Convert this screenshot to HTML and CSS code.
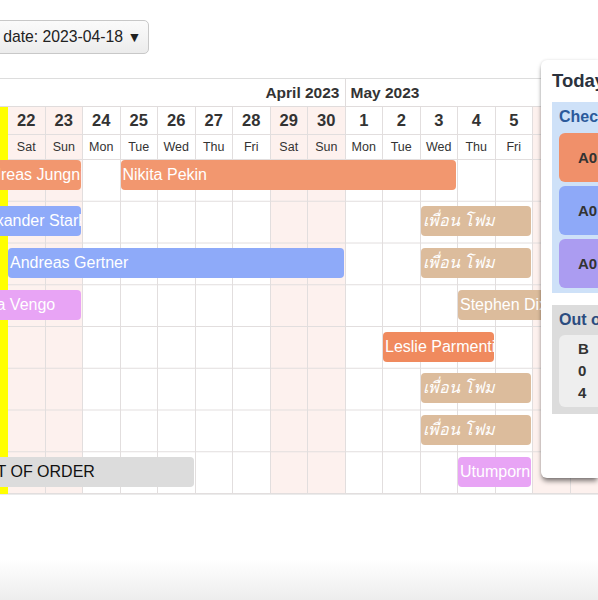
FILE: index.html
```html
<!DOCTYPE html>
<html lang="en">
<head>
<meta charset="utf-8">
<title>Booking calendar</title>
<link rel="stylesheet" href="styles.css">
</head>
<body>
<div class="toolbar">
  <button class="date-btn">Select date: 2023-04-18 <span class="caret">▼</span></button>
</div>

<div class="calendar">
  <div class="inner">
    <div class="months">
      <div class="month month-apr">April 2023</div>
      <div class="month month-may">May 2023</div>
    </div>
    <div class="stage">
      <div class="columns">
        <div class="day today"></div>
        <div class="day we"><div class="num">22</div><div class="name">Sat</div><div class="cells"></div></div>
        <div class="day we"><div class="num">23</div><div class="name">Sun</div><div class="cells"></div></div>
        <div class="day"><div class="num">24</div><div class="name">Mon</div><div class="cells"></div></div>
        <div class="day"><div class="num">25</div><div class="name">Tue</div><div class="cells"></div></div>
        <div class="day"><div class="num">26</div><div class="name">Wed</div><div class="cells"></div></div>
        <div class="day"><div class="num">27</div><div class="name">Thu</div><div class="cells"></div></div>
        <div class="day"><div class="num">28</div><div class="name">Fri</div><div class="cells"></div></div>
        <div class="day we"><div class="num">29</div><div class="name">Sat</div><div class="cells"></div></div>
        <div class="day we"><div class="num">30</div><div class="name">Sun</div><div class="cells"></div></div>
        <div class="day"><div class="num">1</div><div class="name">Mon</div><div class="cells"></div></div>
        <div class="day"><div class="num">2</div><div class="name">Tue</div><div class="cells"></div></div>
        <div class="day"><div class="num">3</div><div class="name">Wed</div><div class="cells"></div></div>
        <div class="day"><div class="num">4</div><div class="name">Thu</div><div class="cells"></div></div>
        <div class="day"><div class="num">5</div><div class="name">Fri</div><div class="cells"></div></div>
        <div class="day we"><div class="num">6</div><div class="name">Sat</div><div class="cells"></div></div>
        <div class="day we"><div class="num">7</div><div class="name">Sun</div><div class="cells"></div></div>
      </div>
      <div class="bars">
        <div class="bar first orange" style="grid-column: 1 / 4; grid-row: 2">Andreas Jungnickel</div>
        <div class="bar first orange" style="grid-column: 5 / 14; grid-row: 2">Nikita Pekin</div>

        <div class="bar blue" style="grid-column: 1 / 4; grid-row: 3">Alexander Stark</div>
        <div class="bar tan thai" style="grid-column: 13 / 16; grid-row: 3">เพื่อน โฟม</div>

        <div class="bar blue" style="grid-column: 2 / 11; grid-row: 4">Andreas Gertner</div>
        <div class="bar tan thai" style="grid-column: 13 / 16; grid-row: 4">เพื่อน โฟม</div>

        <div class="bar violet" style="grid-column: 1 / 4; grid-row: 5">Nina Vengo</div>
        <div class="bar tan" style="grid-column: 14 / 18; grid-row: 5">Stephen Dixon</div>

        <div class="bar coral" style="grid-column: 12 / 15; grid-row: 6">Leslie Parmentier</div>

        <div class="bar tan thai" style="grid-column: 13 / 16; grid-row: 7">เพื่อน โฟม</div>

        <div class="bar tan thai" style="grid-column: 13 / 16; grid-row: 8">เพื่อน โฟม</div>

        <div class="bar grey" style="grid-column: 1 / 7; grid-row: 9">OUT OF ORDER</div>
        <div class="bar violet" style="grid-column: 14 / 16; grid-row: 9">Utumporn</div>
      </div>
    </div>
  </div>
</div>

<div class="page-shade"></div>

<aside class="today-card">
  <h2 class="card-title">Today</h2>
  <section class="panel checkins">
    <h3 class="panel-title">Check-ins</h3>
    <div class="tile tile-orange">A0</div>
    <div class="tile tile-blue">A0</div>
    <div class="tile tile-purple">A0</div>
  </section>
  <section class="panel outoforder">
    <h3 class="panel-title dark">Out of order</h3>
    <div class="ooo-list">
      <div class="ooo-row">B</div>
      <div class="ooo-row">0</div>
      <div class="ooo-row">4</div>
    </div>
  </section>
</aside>
</body>
</html>
```

FILE: styles.css
```css
html, body {
  margin: 0;
  padding: 0;
}

body {
  width: 598px;
  height: 600px;
  overflow: hidden;
  position: relative;
  background: #ffffff;
  font-family: "Liberation Sans", Arial, "Noto Sans", "DejaVu Sans", sans-serif;
  color: #333333;
}

/* ---------- toolbar ---------- */
.toolbar {
  padding-top: 20px;
  height: 34px;
  white-space: nowrap;
}

.date-btn {
  margin-left: -54px;
  height: 34px;
  padding: 0 7px 0 8px;
  font-family: "Liberation Sans", Arial, "DejaVu Sans", sans-serif;
  font-size: 15.75px;
  color: #222222;
  background: linear-gradient(#fbfbfb, #ececec);
  border: 1px solid #c8c8c8;
  border-radius: 5px;
  box-sizing: border-box;
}

.caret {
  font-size: 14px;
}

/* ---------- calendar ---------- */
.calendar {
  margin-top: 24px;
  border-top: 1px solid #dddddd;
  border-bottom: 1px solid #ebebeb;
  overflow: hidden;
}

.inner {
  margin-left: -29.5px;
  width: 637.5px;
}

.months {
  display: flex;
  height: 28px;
  box-sizing: border-box;
  border-bottom: 1px solid #e0dcdc;
  font-weight: bold;
  font-size: 15.5px;
  line-height: 27px;
  color: #333333;
}

.month-apr {
  width: 375px;
  flex: none;
  box-sizing: border-box;
  text-align: right;
  padding-right: 5px;
  border-right: 1px solid #e0dcdc;
}

.month-may {
  padding-left: 5px;
}

.stage {
  display: grid;
}

.stage > .columns,
.stage > .bars {
  grid-area: 1 / 1;
}

.columns {
  display: flex;
}

.day {
  width: 37.5px;
  flex: none;
  box-sizing: border-box;
  border-right: 1px solid #e2dede;
}

.day.we {
  background: #fdf1ee;
}

.day.today {
  background: #ffff00;
  border-right: none;
  height: 387px;
}

.num {
  height: 28px;
  box-sizing: border-box;
  border-bottom: 1px solid #e2dede;
  font-weight: bold;
  font-size: 16.5px;
  line-height: 27px;
  text-align: center;
  color: #333333;
}

.name {
  height: 25px;
  box-sizing: border-box;
  border-bottom: 1px solid #e2dede;
  font-size: 12.5px;
  line-height: 24px;
  text-align: center;
  color: #333333;
}

.cells {
  height: 334px;
  background-image: linear-gradient(to top, #e2dede 1px, transparent 1px);
  background-size: 100% 41.75px;
}

/* ---------- bars ---------- */
.bars {
  display: grid;
  grid-template-columns: repeat(17, 37.5px);
  grid-template-rows: 53px repeat(8, 41.75px);
}

.bar {
  align-self: start;
  min-width: 0;
  margin: 4.5px 2px 0 0;
  height: 30px;
  padding: 0 2px;
  border-radius: 4px;
  font-size: 16px;
  line-height: 30px;
  color: #ffffff;
  white-space: nowrap;
  overflow: hidden;
}

.bar.first {
  margin-top: 0;
  height: 29.5px;
}

.bar.thai {
  font-style: italic;
}

.orange { background: #f2976f; }
.coral  { background: #f08a5e; }
.blue   { background: #8eaaf9; }
.violet { background: #e8a4f5; }
.tan    { background: #dcbc9c; }
.grey   { background: #dcdcdc; color: #111111; }

/* ---------- bottom shade ---------- */
.page-shade {
  margin-top: 64px;
  height: 41px;
  background: linear-gradient(#ffffff, #ededed);
}

/* ---------- today card (overlay) ---------- */
.today-card {
  position: absolute;
  left: 541px;
  top: 60px;
  width: 57px;
  height: 418px;
  box-sizing: border-box;
  padding: 10px 0 0 11px;
  background: #ffffff;
  border-radius: 6px 0 0 6px;
  box-shadow: 0 4px 5px -1px rgba(0, 0, 0, 0.5), 0 0 3px rgba(0, 0, 0, 0.12);
  white-space: nowrap;
  overflow: hidden;
}

.card-title {
  margin: 0;
  font-size: 18.5px;
  line-height: 22px;
  font-weight: bold;
  color: #2b323d;
}

.panel {
  padding: 5px 0 5px 7px;
}

.checkins {
  margin-top: 10px;
  background: #cee1f8;
}

.outoforder {
  margin-top: 12px;
  background: #dcdcdc;
  padding-bottom: 7px;
}

.panel-title {
  margin: 0 0 6px;
  font-size: 16px;
  line-height: 20px;
  font-weight: bold;
  color: #2b5a9b;
}

.panel-title.dark {
  margin-bottom: 5px;
  color: #2b4c7f;
}

.tile {
  height: 49px;
  margin-bottom: 4px;
  border-radius: 6px 0 0 6px;
  padding-left: 19px;
  display: flex;
  align-items: center;
  font-weight: bold;
  font-size: 15px;
  color: #333333;
}

.tile:last-child {
  margin-bottom: 0;
}

.tile-orange { background: #f0906a; }
.tile-blue   { background: #8ea9f8; }
.tile-purple { background: #ab9cf1; }

.ooo-list {
  background: #eeeeee;
  border-radius: 6px 0 0 6px;
  padding: 3px 0 3px 19px;
  font-weight: bold;
  font-size: 15px;
  line-height: 22px;
  color: #333333;
}
```
